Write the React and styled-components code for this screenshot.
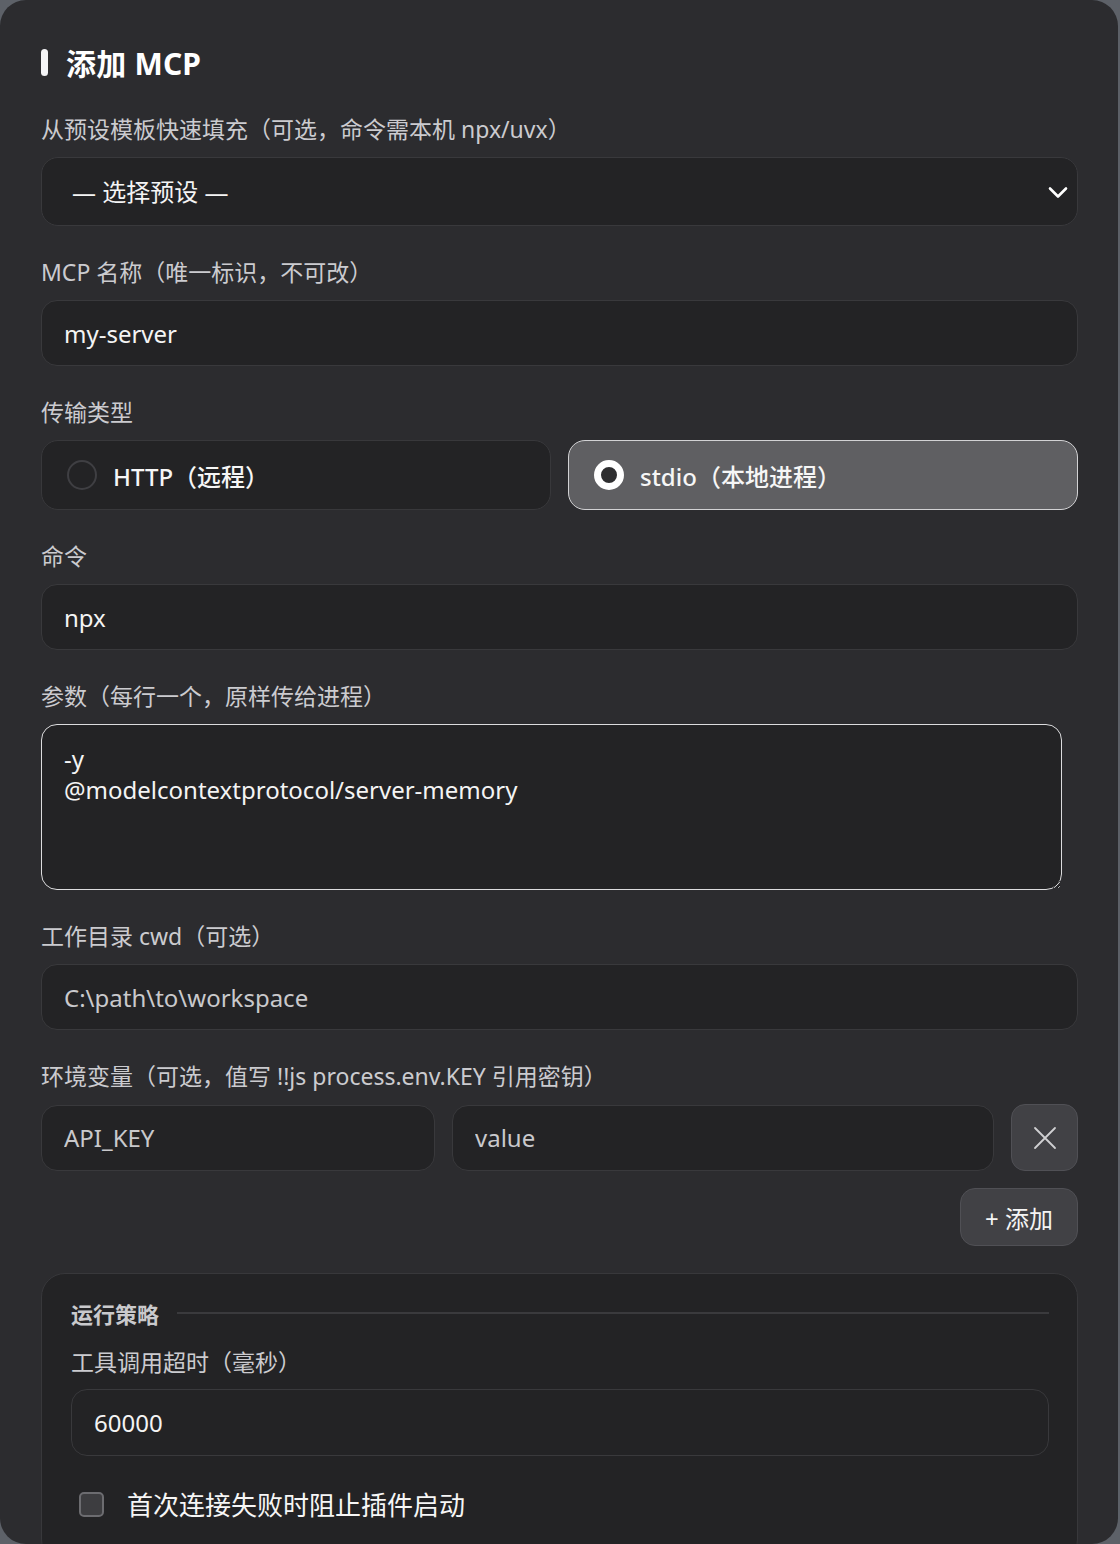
import React, { useEffect, useRef } from "react";
import styled, { createGlobalStyle } from "styled-components";

const GlobalStyle = createGlobalStyle`
  html, body {
    margin: 0;
    padding: 0;
    background: #5d6168;
  }
  body {
    font-family: "Noto Sans", "Noto Sans CJK SC", sans-serif;
    -webkit-font-smoothing: antialiased;
  }
  * { box-sizing: border-box; }
`;

const Card = styled.div`
  width: 1118px;
  height: 1544px;
  overflow: hidden;
  background: #2c2c2f;
  border-radius: 26px;
  padding: 42px 40px 0 41px;
  display: flex;
  flex-direction: column;
`;

const Title = styled.h2`
  margin: 0;
  display: flex;
  align-items: center;
  gap: 18px;
  height: 40px;
  font-size: 30px;
  font-weight: 700;
  color: #ffffff;
  letter-spacing: 0.2px;
`;

const TitleBar = styled.span`
  width: 7px;
  height: 27px;
  border-radius: 4px;
  background: #f4f4f6;
`;

const Form = styled.div`
  margin-top: 32px;
  display: flex;
  flex-direction: column;
  gap: 31px;
`;

const Field = styled.div`
  display: flex;
  flex-direction: column;
  gap: ${(p) => (p.$gap ? p.$gap : 13)}px;
`;

const Label = styled.label`
  font-size: 23px;
  line-height: 30px;
  color: #cbcbcf;
`;

const SelectWrap = styled.div`
  position: relative;
  height: 69px;
`;

const Select = styled.select`
  appearance: none;
  width: 100%;
  height: 100%;
  background: #232325;
  border: 1px solid #39393c;
  border-radius: 17px;
  padding: 0 60px 0 30px;
  font-family: inherit;
  font-size: 24px;
  color: #f4f4f4;
  outline: none;
`;

const Chevron = styled.svg`
  position: absolute;
  right: 8px;
  top: 50%;
  transform: translateY(-50%);
  pointer-events: none;
`;

const Input = styled.input`
  width: 100%;
  height: ${(p) => (p.$h ? p.$h : 66)}px;
  background: #232325;
  border: 1px solid #39393c;
  border-radius: 16px;
  padding: 0 22px;
  font-family: inherit;
  font-size: 24px;
  color: #f4f4f4;
  outline: none;
  &::placeholder {
    color: #c9c9cc;
  }
`;

const RadioRow = styled.div`
  display: grid;
  grid-template-columns: 1fr 1fr;
  gap: 17px;
`;

const RadioCard = styled.div`
  height: 70px;
  display: flex;
  align-items: center;
  gap: 16px;
  padding-left: 25px;
  border-radius: 17px;
  background: ${(p) => (p.$active ? "#5f5f62" : "#232325")};
  border: ${(p) => (p.$active ? "1.5px solid #d2d2d4" : "1px solid #38383b")};
  font-size: 24px;
  font-weight: 500;
  color: #f6f6f6;
  cursor: pointer;
`;

const RadioDot = styled.span`
  width: 30px;
  height: 30px;
  border-radius: 50%;
  flex-shrink: 0;
  border: ${(p) => (p.$active ? "7px solid #ffffff" : "2px solid #3f3f43")};
  background: ${(p) => (p.$active ? "#2e2e30" : "transparent")};
`;

const TextArea = styled.textarea`
  width: calc(100% - 16px);
  height: 166px;
  resize: vertical;
  background: #232325;
  border: 1.5px solid #dcdcde;
  border-radius: 16px;
  padding: 18px 22px;
  font-family: inherit;
  font-size: 24px;
  line-height: 31px;
  color: #f4f4f4;
  outline: none;
  caret-color: #ffffff;
`;

const EnvRow = styled.div`
  display: grid;
  grid-template-columns: 394px 1fr 67px;
  gap: 17px;
  align-items: center;
`;

const IconButton = styled.button`
  width: 67px;
  height: 67px;
  border-radius: 14px;
  background: #414145;
  border: 1px solid #505055;
  display: flex;
  align-items: center;
  justify-content: center;
  padding: 0;
  cursor: pointer;
`;

const AddRow = styled.div`
  display: flex;
  justify-content: flex-end;
`;

const AddButton = styled.button`
  height: 58px;
  padding: 0 24px;
  border-radius: 15px;
  background: #414145;
  border: 1px solid #505055;
  font-family: inherit;
  font-size: 24px;
  color: #f4f4f4;
  cursor: pointer;
`;

const Section = styled.div`
  margin-top: -4px;
  background: #232325;
  border: 1px solid #38383b;
  border-radius: 24px;
  padding: 25px 28px 40px 29px;
  display: flex;
  flex-direction: column;
`;

const SectionHead = styled.div`
  display: flex;
  align-items: center;
  gap: 18px;
  height: 28px;
  font-size: 22px;
  font-weight: 700;
  color: #c9c9cc;
`;

const SectionLine = styled.span`
  flex: 1;
  height: 2px;
  background: #3a3a3d;
`;

const SectionField = styled(Field)`
  margin-top: 20px;
  gap: 12px;
`;

const CheckRow = styled.label`
  margin-top: 30px;
  display: flex;
  align-items: center;
  gap: 23px;
  padding-left: 8px;
  height: 36px;
  font-size: 26px;
  color: #f6f6f6;
  cursor: pointer;
`;

const CheckBox = styled.span`
  width: 25px;
  height: 25px;
  border-radius: 5px;
  background: #3d3d40;
  border: 2px solid #6c6c70;
  flex-shrink: 0;
`;

export default function App() {
  const taRef = useRef(null);
  useEffect(() => {
    const el = taRef.current;
    if (el) {
      el.focus();
      const n = el.value.length;
      el.setSelectionRange(n, n);
    }
  }, []);

  return (
    <>
      <GlobalStyle />
      <Card>
        <Title>
          <TitleBar />
          添加 MCP
        </Title>
        <Form>
          <Field>
            <Label>从预设模板快速填充（可选，命令需本机 npx/uvx）</Label>
            <SelectWrap>
              <Select defaultValue="">
                <option value="">— 选择预设 —</option>
              </Select>
              <Chevron width="24" height="24" viewBox="0 0 24 24" fill="none">
                <path d="M4 8.5 12 16.5 20 8.5" stroke="#ffffff" strokeWidth="2.6" strokeLinecap="round" strokeLinejoin="round" />
              </Chevron>
            </SelectWrap>
          </Field>
          <Field>
            <Label>MCP 名称（唯一标识，不可改）</Label>
            <Input defaultValue="my-server" />
          </Field>
          <Field>
            <Label>传输类型</Label>
            <RadioRow>
              <RadioCard>
                <RadioDot />
                HTTP（远程）
              </RadioCard>
              <RadioCard $active>
                <RadioDot $active />
                stdio（本地进程）
              </RadioCard>
            </RadioRow>
          </Field>
          <Field>
            <Label>命令</Label>
            <Input defaultValue="npx" />
          </Field>
          <Field>
            <Label>参数（每行一个，原样传给进程）</Label>
            <TextArea ref={taRef} defaultValue={"-y\n@modelcontextprotocol/server-memory"} />
          </Field>
          <Field>
            <Label>工作目录 cwd（可选）</Label>
            <Input placeholder="C:\path\to\workspace" />
          </Field>
          <Field>
            <Label>环境变量（可选，值写 !!js process.env.KEY 引用密钥）</Label>
            <Field $gap={17}>
              <EnvRow>
                <Input placeholder="API_KEY" />
                <Input placeholder="value" />
                <IconButton aria-label="删除">
                  <svg width="24" height="24" viewBox="0 0 24 24" fill="none">
                    <path d="M2 2 22 22M22 2 2 22" stroke="#d0d0d2" strokeWidth="1.8" strokeLinecap="round" />
                  </svg>
                </IconButton>
              </EnvRow>
              <AddRow>
                <AddButton>+ 添加</AddButton>
              </AddRow>
            </Field>
          </Field>
          <Section>
            <SectionHead>
              运行策略
              <SectionLine />
            </SectionHead>
            <SectionField>
              <Label>工具调用超时（毫秒）</Label>
              <Input $h={67} defaultValue="60000" />
            </SectionField>
            <CheckRow>
              <CheckBox />
              首次连接失败时阻止插件启动
            </CheckRow>
          </Section>
        </Form>
      </Card>
    </>
  );
}
